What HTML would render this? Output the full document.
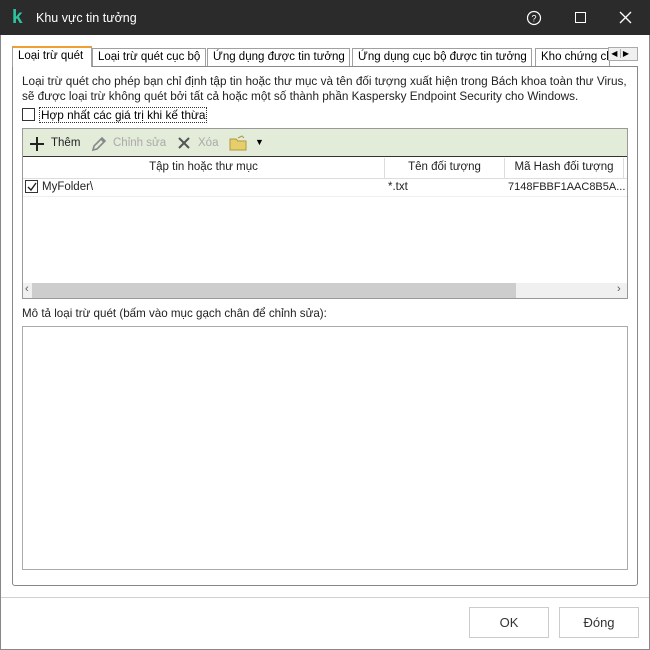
<!DOCTYPE html><html><head><meta charset="utf-8"><style>
*{margin:0;padding:0;box-sizing:border-box}
body{width:650px;height:650px;background:#fff;font-family:"Liberation Sans","DejaVu Sans",sans-serif;font-size:11.5px;color:#000;position:relative;overflow:hidden}
.abs{position:absolute}
.title{left:0;top:0;width:650px;height:35px;background:#2b2b2b;color:#fff}
.tab{position:absolute;top:48px;height:19px;border:1px solid #a0a0a0;border-bottom:none;background:#fff;white-space:nowrap;overflow:hidden;padding:2px 4px 0 5px;font-size:11.5px}
.panel{left:12px;top:66px;width:626px;height:520px;border:1px solid #888;border-radius:0 0 3px 3px}
.btn{position:absolute;top:607px;width:80px;height:31px;border:1px solid #ccc;text-align:center;line-height:30px;font-size:13px;color:#333}
</style></head><body>
<div class="abs" style="left:0;top:0;width:650px;height:650px;border:1px solid #888;border-top:none"></div>
<div class="abs title">
<div class="abs" style="left:12px;top:7px;color:#2dc4a0;font-weight:bold;font-size:19px">k</div>
<div class="abs" style="left:36px;top:11px;font-size:12.5px">Khu vực tin tưởng</div>
<svg class="abs" style="left:526px;top:10px" width="16" height="16"><circle cx="8" cy="8" r="6.5" fill="none" stroke="#fff" stroke-width="1.2"/><text x="8" y="11.5" font-size="9" fill="#fff" text-anchor="middle" font-family="Liberation Sans">?</text></svg>
<div class="abs" style="left:575px;top:12px;width:11px;height:11px;border:1.3px solid #fff"></div>
<svg class="abs" style="left:619px;top:11px" width="13" height="13"><path d="M1 1L12 12M12 1L1 12" stroke="#fff" stroke-width="1.3"/></svg>
</div>
<div class="tab" style="left:12px;top:46px;height:21px;width:80px;border-top:2px solid #f0a030;z-index:2;padding-top:2px">Loại trừ quét</div>
<div class="tab" style="left:92px;width:114px">Loại trừ quét cục bộ</div>
<div class="tab" style="left:207px;width:143px">Ứng dụng được tin tưởng</div>
<div class="tab" style="left:352px;width:180px">Ứng dụng cục bộ được tin tưởng</div>
<div class="tab" style="left:535px;width:75px">Kho chứng chỉ</div>
<div class="abs" style="left:608px;top:47px;width:30px;height:14px;border:1px solid #aaa;background:#f0f0f0;font-size:8px;line-height:12px">&nbsp;◀ <span style="border-left:1px solid #aaa">&nbsp;▶</span></div>
<div class="abs panel"></div>
<div class="abs" style="left:22px;top:74px;width:615px;line-height:15px;font-size:11.75px;color:#222;white-space:nowrap">Loại trừ quét cho phép bạn chỉ định tập tin hoặc thư mục và tên đối tượng xuất hiện trong Bách khoa toàn thư Virus,<br>sẽ được loại trừ không quét bởi tất cả hoặc một số thành phần Kaspersky Endpoint Security cho Windows.</div>
<div class="abs" style="left:22px;top:108px;width:13px;height:13px;border:1px solid #333"></div>
<div class="abs" style="left:39px;top:107px;border:1px dotted #333;padding:0 1px;font-size:11.8px">Hợp nhất các giá trị khi kế thừa</div>
<div class="abs" style="left:22px;top:128px;width:606px;height:171px;border:1px solid #999"></div>
<div class="abs" style="left:23px;top:129px;width:604px;height:28px;background:#e3ebd9;border-bottom:1px solid #333"></div>
<svg class="abs" style="left:29px;top:136px" width="16" height="16"><path d="M8 1V15M1 8H15" stroke="#222" stroke-width="2"/></svg>
<div class="abs" style="left:51px;top:137px;color:#222">Thêm</div>
<svg class="abs" style="left:90px;top:135px" width="17" height="17"><path d="M3 15L4 11L12 3L15 6L7 14Z M11 4L14 7" stroke="#888" stroke-width="1.6" fill="none"/></svg>
<div class="abs" style="left:113px;top:137px;color:#aaa">Chỉnh sửa</div>
<svg class="abs" style="left:178px;top:137px" width="12" height="12"><path d="M1 1L11 11M11 1L1 11" stroke="#555" stroke-width="2"/></svg>
<div class="abs" style="left:198px;top:137px;color:#aaa">Xóa</div>
<svg class="abs" style="left:229px;top:135px" width="18" height="16"><path d="M1 4h6l2 2h8v9H1z" fill="#e6cf6a" stroke="#b09a40"/><path d="M9 3l4-2 2 2" stroke="#b09a40" fill="none"/></svg>
<div class="abs" style="left:255px;top:137px;font-size:9px">▼</div>
<div class="abs" style="left:23px;top:158px;width:604px;height:21px;border-bottom:1px solid #ddd;color:#222">
<div class="abs" style="left:0;top:3px;width:361px;text-align:center">Tập tin hoặc thư mục</div>
<div class="abs" style="left:361px;top:0;height:20px;border-left:1px solid #ddd;width:120px;text-align:center;padding-top:3px">Tên đối tượng</div>
<div class="abs" style="left:481px;top:0;height:20px;border-left:1px solid #ddd;border-right:1px solid #ddd;width:120px;text-align:center;padding-top:3px">Mã Hash đối tượng</div>
</div>
<div class="abs" style="left:23px;top:179px;width:604px;height:18px;border-bottom:1px solid #eee"></div>
<div class="abs" style="left:25px;top:180px;width:13px;height:13px;border:1px solid #333"></div>
<svg class="abs" style="left:26px;top:181px" width="12" height="12"><path d="M2 6L5 9L10 2" stroke="#222" stroke-width="1.4" fill="none"/></svg>
<div class="abs" style="left:42px;top:181px;color:#222">MyFolder\</div>
<div class="abs" style="left:388px;top:181px;color:#222">*.txt</div>
<div class="abs" style="left:508px;top:181px;color:#222;font-size:11px">7148FBBF1AAC8B5A...</div>
<div class="abs" style="left:23px;top:283px;width:604px;height:15px;background:#f0f0f0"></div>
<div class="abs" style="left:32px;top:283px;width:484px;height:15px;background:#cdcdcd"></div>
<div class="abs" style="left:25px;top:283px;font-size:11px;color:#555">‹</div>
<div class="abs" style="left:617px;top:283px;font-size:11px;color:#555">›</div>
<div class="abs" style="left:22px;top:307px;color:#222;font-size:11.6px">Mô tả loại trừ quét (bấm vào mục gạch chân để chỉnh sửa):</div>
<div class="abs" style="left:22px;top:326px;width:606px;height:244px;border:1px solid #aaa"></div>
<div class="abs" style="left:1px;top:597px;width:648px;height:1px;background:#d0d0d0"></div>
<div class="btn" style="left:469px">OK</div>
<div class="btn" style="left:559px">Đóng</div>
</body></html>
